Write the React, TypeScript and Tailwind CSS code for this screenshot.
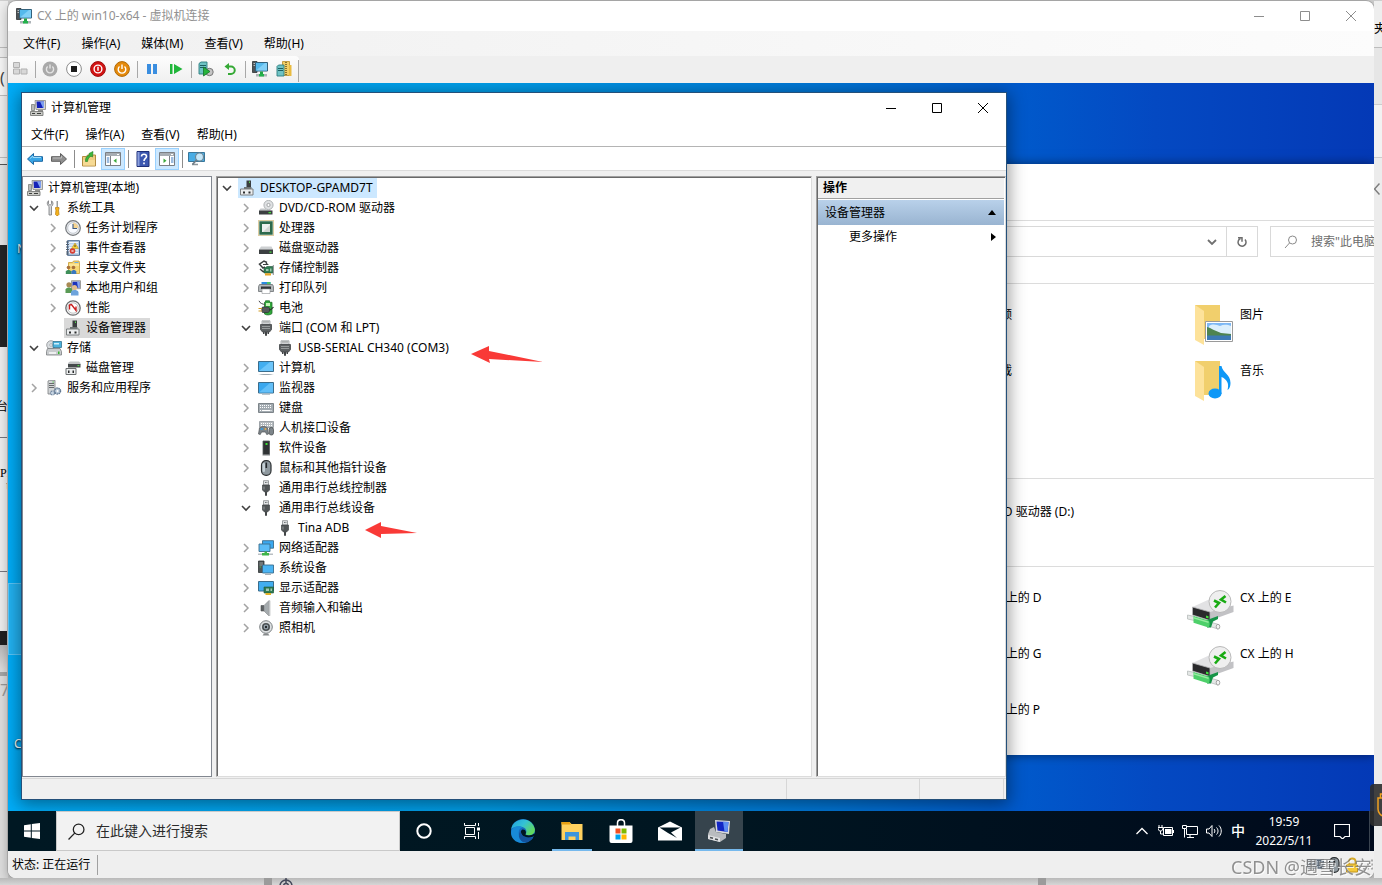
import React from 'react';

type TreeItem = {
  label: string;
  icon: string;
  depth: number;
  state?: 'open' | 'closed' | 'leaf' | 'root';
  selected?: boolean;
  arrow?: 'long' | 'short';
};

const indents = ['pl-0', 'pl-[19px]', 'pl-[38px]'];

const consoleTree: TreeItem[] = [
  { label: '计算机管理(本地)', icon: 'pc', depth: 0, state: 'root' },
  { label: '系统工具', icon: 'tools', depth: 0, state: 'open' },
  { label: '任务计划程序', icon: 'clock', depth: 1, state: 'closed' },
  { label: '事件查看器', icon: 'event', depth: 1, state: 'closed' },
  { label: '共享文件夹', icon: 'share', depth: 1, state: 'closed' },
  { label: '本地用户和组', icon: 'users', depth: 1, state: 'closed' },
  { label: '性能', icon: 'perf', depth: 1, state: 'closed' },
  { label: '设备管理器', icon: 'device', depth: 1, state: 'leaf', selected: true },
  { label: '存储', icon: 'storage', depth: 0, state: 'open' },
  { label: '磁盘管理', icon: 'disk', depth: 1, state: 'leaf' },
  { label: '服务和应用程序', icon: 'services', depth: 0, state: 'closed' },
];

const deviceTree: TreeItem[] = [
  { label: 'DESKTOP-GPAMD7T', icon: 'device', depth: 0, state: 'open', selected: true },
  { label: 'DVD/CD-ROM 驱动器', icon: 'dvd', depth: 1, state: 'closed' },
  { label: '处理器', icon: 'cpu', depth: 1, state: 'closed' },
  { label: '磁盘驱动器', icon: 'hdd', depth: 1, state: 'closed' },
  { label: '存储控制器', icon: 'controller', depth: 1, state: 'closed' },
  { label: '打印队列', icon: 'printer', depth: 1, state: 'closed' },
  { label: '电池', icon: 'battery', depth: 1, state: 'closed' },
  { label: '端口 (COM 和 LPT)', icon: 'port', depth: 1, state: 'open' },
  { label: 'USB-SERIAL CH340 (COM3)', icon: 'port', depth: 2, state: 'leaf', arrow: 'long' },
  { label: '计算机', icon: 'computer', depth: 1, state: 'closed' },
  { label: '监视器', icon: 'monitor', depth: 1, state: 'closed' },
  { label: '键盘', icon: 'keyboard', depth: 1, state: 'closed' },
  { label: '人机接口设备', icon: 'hid', depth: 1, state: 'closed' },
  { label: '软件设备', icon: 'software', depth: 1, state: 'closed' },
  { label: '鼠标和其他指针设备', icon: 'mouse', depth: 1, state: 'closed' },
  { label: '通用串行总线控制器', icon: 'usb', depth: 1, state: 'closed' },
  { label: '通用串行总线设备', icon: 'usb', depth: 1, state: 'open' },
  { label: 'Tina ADB', icon: 'usb', depth: 2, state: 'leaf', arrow: 'short' },
  { label: '网络适配器', icon: 'network', depth: 1, state: 'closed' },
  { label: '系统设备', icon: 'system', depth: 1, state: 'closed' },
  { label: '显示适配器', icon: 'display', depth: 1, state: 'closed' },
  { label: '音频输入和输出', icon: 'audio', depth: 1, state: 'closed' },
  { label: '照相机', icon: 'camera', depth: 1, state: 'closed' },
];

const glyphs: Record<string, React.ReactNode> = {
  pc: (
    <>
      <path d="M5 0.500h10.500v9H6z" fill="#d8d8d4" stroke="#8a8a88" strokeWidth="0.8" />
      <path d="M6.500 1.500h7.500v6.500H7z" fill="#1522b8" />
      <path d="M10 1.500h4v6.500h-1z" fill="#7ea0f0" />
      <path d="M8 10h5v1.500H8z" fill="#8d8d8a" />
      <path d="M1.500 4.500h3v6h-3z" fill="#b8bab8" stroke="#707270" strokeWidth="0.7" />
      <path d="M0.500 11.500h12.500v4H0.500z" fill="#c9cac6" stroke="#6d6f6d" strokeWidth="0.8" />
      <path d="M2 13.500h3M7 13.500h4" stroke="#3c3e3c" strokeWidth="1.200" />
    </>
  ),
  tools: (
    <>
      <path d="M2.500 0.800v3l1.500 1.500 1.500-1.500v-3c2 1.200 2 4.200 0 5.700V15H3V6.500C0.800 5 0.800 2 2.500 0.800z" fill="#d5d7d9" stroke="#77797b" strokeWidth="0.8" />
      <path d="M10.500 1h1.500v6h-1.500z" fill="#9a9c9e" />
      <path d="M9.500 7.500h3.500v1.500l-0.500 1 0.500 4.500-1 1h-1.500l-1-1 0.500-4.500-0.500-1z" fill="#f5b31d" stroke="#b87a08" strokeWidth="0.7" />
    </>
  ),
  clock: (
    <>
      <circle cx="8" cy="8" r="7.300" fill="#e8eaed" stroke="#74787c" strokeWidth="1.200" />
      <circle cx="8" cy="8" r="5.300" fill="#f9fbff" stroke="#aab0b8" strokeWidth="0.6" />
      <path d="M8 2.700a5.300 5.300 0 0 1 5.300 5.300H8z" fill="#f5d491" />
      <path d="M8 4v4.500h4" fill="none" stroke="#3c5980" strokeWidth="1.100" />
    </>
  ),
  event: (
    <>
      <path d="M2.500 0.700h12v14.600h-12z" fill="#b9d0ea" stroke="#4a688e" strokeWidth="1" />
      <path d="M4 2.500h9M4 5h9M4 7.500h9M4 10h9M4 12.500h9" stroke="#fff" strokeWidth="0.8" />
      <path d="M1 2h3M1 4.500h3M1 7h3M1 9.500h3M1 12h3M1 14h3" stroke="#55606d" strokeWidth="1" />
      <path d="M10 3l3.500 5.500h-7z" fill="#f8cf32" stroke="#b78a10" strokeWidth="0.5" />
      <path d="M10 4.800v2.200" stroke="#222" strokeWidth="0.8" />
      <circle cx="7.500" cy="11" r="2.800" fill="#d63c31" />
      <path d="M6.500 10l2 2m0-2l-2 2" stroke="#fff" strokeWidth="0.7" />
    </>
  ),
  share: (
    <>
      <path d="M3.500 2.500h4l1-1.500h5.500l0.500 1.500v11h-11z" fill="#f7d774" stroke="#c79c34" strokeWidth="0.8" />
      <path d="M9.500 2h4v1h-4z" fill="#6fb1e8" />
      <path d="M4 4.500h10v1H4z" fill="#fdf0b9" />
      <circle cx="3.500" cy="7.500" r="1.800" fill="#a9713a" />
      <path d="M0.800 14v-2.500c1-2 4.400-2 5.400 0V14z" fill="#3f8f5a" />
      <circle cx="8.500" cy="7.500" r="1.800" fill="#a9713a" />
      <path d="M6.300 14v-2.500c1-2 4-2 5 0V14z" fill="#3a78c0" />
    </>
  ),
  users: (
    <>
      <path d="M6.500 0.700h9v8h-9z" fill="#d8d8d4" stroke="#8a8a88" strokeWidth="0.8" />
      <path d="M7.500 1.700h7v6h-7z" fill="#1c32bc" />
      <path d="M12 1.700h2.500v6h-1.500z" fill="#86a8f4" />
      <circle cx="4" cy="4.800" r="2.600" fill="#a98a54" />
      <path d="M0.500 13V9.500c1.500-2.600 5.500-2.600 7 0V13z" fill="#5a9a55" />
      <circle cx="9.500" cy="7.500" r="2.600" fill="#e3bd8d" />
      <path d="M6 15.500V12c1.500-2.600 6-2.600 7.500 0v3.500z" fill="#6ea4dc" />
    </>
  ),
  perf: (
    <>
      <circle cx="8" cy="8" r="7.200" fill="#f4f4f4" stroke="#6c6e70" strokeWidth="1.300" />
      <circle cx="8" cy="8" r="5.200" fill="#fff" stroke="#b5b7b9" strokeWidth="0.8" />
      <path d="M4.500 9.500V5l2-0.500 4.500 6V6.500" fill="none" stroke="#c91d1d" strokeWidth="1.400" />
    </>
  ),
  device: (
    <>
      <path d="M7.500 0.500h4.500v6.500H7.500z" fill="#3b3f40" />
      <path d="M10 1.500h1v1.500h-1z" fill="#55d84e" />
      <path d="M5 7h7.500v2H5z" fill="#6f7475" />
      <path d="M1.500 9h12.500v6H1.500z" fill="#eceeef" stroke="#7b7f80" strokeWidth="1" />
      <path d="M4 11.500h2v2H4zM9.500 11.500h2v2h-2z" fill="#2b2d2e" />
    </>
  ),
  storage: (
    <>
      <circle cx="5" cy="5" r="4.300" fill="#d9dde0" stroke="#8d9194" strokeWidth="0.8" />
      <circle cx="5" cy="5" r="1.300" fill="#fff" stroke="#8d9194" strokeWidth="0.6" />
      <path d="M7 1.500h8.500v6H7z" fill="#4bb2dc" stroke="#34748f" strokeWidth="0.8" />
      <path d="M8 3h5v1.500H8z" fill="#cdeefa" />
      <path d="M1.500 8.500h12.500l1.500 3v3.500H0.500v-3.500z" fill="#c9ccce" stroke="#7b7f82" strokeWidth="0.8" />
      <path d="M3 12h7v2H3z" fill="#eff0f1" />
      <path d="M12 11.500h1.500v2.500H12z" fill="#35b52e" />
    </>
  ),
  disk: (
    <>
      <path d="M3 3l2-1.500h9l1.500 1.500v2H3z" fill="#c2c5c6" />
      <path d="M3 4h12.500v3.500H3z" fill="#45494b" />
      <path d="M12.500 5h1.800v1.200h-1.800z" fill="#4dd746" />
      <path d="M1 8.500h10v6H1z" fill="#eceeef" stroke="#6b6f70" strokeWidth="1" />
      <path d="M3 10.500h1.500v2.500H3zM7.500 10.500H9v2.500H7.500z" fill="#2b2d2e" />
    </>
  ),
  services: (
    <>
      <path d="M2 1l1.500-0.700h5.500V14H2z" fill="#d2d5d7" stroke="#7b7f82" strokeWidth="0.8" />
      <path d="M3 3.500h5M3 5.500h5M3 7.500h5" stroke="#5a5e60" strokeWidth="0.9" />
      <path d="M6.500 1.500h1.300v1H6.500z" fill="#3fbd38" />
      <circle cx="11.500" cy="11" r="3" fill="#b9c9da" stroke="#5f7690" strokeWidth="1.500" strokeDasharray="1.400 0.7" />
      <circle cx="11.500" cy="11" r="1" fill="#fff" />
      <circle cx="6.500" cy="13" r="2" fill="#c8d6e4" stroke="#6f86a0" strokeWidth="1.200" strokeDasharray="1.100 0.6" />
    </>
  ),
  dvd: (
    <>
      <circle cx="10.500" cy="5" r="4.600" fill="#dfe1e3" stroke="#a0a4a6" strokeWidth="0.8" />
      <circle cx="10.500" cy="5" r="1.600" fill="#fff" stroke="#909496" strokeWidth="0.8" />
      <path d="M2.500 8.500h5l2 1.500h3l2 0.500H1z" fill="#c5c8ca" />
      <path d="M1 10.500h13.500v4H1z" fill="#3b3f41" />
      <path d="M10.500 12h2.500v1.200h-2.500z" fill="#48dc40" />
    </>
  ),
  cpu: (
    <>
      <path d="M0.500 0.500h15v15h-15z" fill="none" stroke="#bb9a44" strokeWidth="1" strokeDasharray="1 1" />
      <path d="M1.300 1.300h13.400v13.400H1.300z" fill="#2d6a4c" />
      <path d="M4 4h8v8H4z" fill="#eef0ef" />
      <path d="M5 12L12 5v7z" fill="#d2d6d3" />
    </>
  ),
  hdd: (
    <>
      <path d="M3 6.500h10.500L15 9.500H1z" fill="#cdd0d2" />
      <path d="M1 9.500h14v4.500H1z" fill="#3b3f41" />
      <path d="M11.500 11.500h2v1.200h-2z" fill="#48dc40" />
    </>
  ),
  controller: (
    <>
      <path d="M9 2.500L6 1 1.500 4.200 5 8l2-1" fill="none" stroke="#3c3f40" strokeWidth="1.500" />
      <path d="M5 4.500h4.500l-1.500-1.500" fill="none" stroke="#3c3f40" strokeWidth="1.200" />
      <path d="M2 9l3 2.500 2 0.500" fill="none" stroke="#3c3f40" strokeWidth="1.400" />
      <path d="M6 8.500l3-2h6v6.500H6z" fill="#2f7d53" stroke="#1f5437" strokeWidth="0.6" />
      <path d="M8 9h2.500v2H8zM12 8.500h1.500v3H12z" fill="#9cc5ae" />
      <path d="M7 13.200h6v2.300H7z" fill="#e4a527" />
      <path d="M15.300 5v10" stroke="#8a8e90" strokeWidth="1" />
    </>
  ),
  printer: (
    <>
      <path d="M3.500 2h9v3h-9z" fill="#2c8be0" />
      <path d="M9 2h3.500v3H9z" fill="#45c06a" />
      <path d="M1.500 4.500h13l1 2v5h-15v-5z" fill="#b4b8ba" stroke="#6d7173" strokeWidth="0.8" />
      <path d="M3 6.500h10v2.500H3z" fill="#33373a" />
      <path d="M4 9h8v4.500H4z" fill="#fff" stroke="#8d9193" strokeWidth="0.6" />
    </>
  ),
  battery: (
    <>
      <path d="M7.500 0.800h4v1.500h2.500v11.200c-1.500 1.500-5 2-7.500 0.500V2.300h1z" fill="#2fa83a" stroke="#22702a" strokeWidth="0.8" />
      <path d="M8 3h4v3H8z" fill="#c6f5b8" />
      <path d="M1 0.800c1 3 4 3 6 4" fill="none" stroke="#4a4d4f" strokeWidth="1" />
      <path d="M4.500 7h5c3 0 3 5.500 0 5.500h-5c-1-1-1-4.500 0-5.500z" fill="#54585a" stroke="#2d3031" strokeWidth="0.7" />
      <path d="M0.500 8.500h3.500M0.500 11h3.500" stroke="#d09a22" strokeWidth="1.200" />
      <path d="M11 10c2 0 3-1 4.500-3" fill="none" stroke="#2d3031" strokeWidth="1.200" />
    </>
  ),
  port: (
    <>
      <path d="M4 0.800h8v3.500H4z" fill="#dcdedf" stroke="#9b9fa1" strokeWidth="0.8" />
      <path d="M5.500 2h1M7.500 2h1M9.500 2h1" stroke="#54585a" strokeWidth="1" />
      <path d="M2.500 4.500h11v5l-2 2.500h-7l-2-2.500z" fill="#5d6163" stroke="#414446" strokeWidth="0.8" />
      <path d="M4 6.500h8M4 8.500h8" stroke="#a4a8aa" strokeWidth="0.8" />
      <path d="M5 12h1.500v2H5zM9.500 12H11v2H9.500zM7 12h2v3.700H7z" fill="#414446" />
    </>
  ),
  computer: (
    <>
      <path d="M0.500 1.500h15v10h-15z" fill="#42aef0" stroke="#3b6d8c" strokeWidth="1" />
      <path d="M1 11L12 2h3v9z" fill="#6cc5fa" />
      <path d="M0 15c3-1.500 13-1.500 16 0z" fill="#9ba7b0" />
    </>
  ),
  monitor: (
    <>
      <path d="M0.500 2.500h15v10.500h-15z" fill="#3aa8ef" stroke="#3b6d8c" strokeWidth="1" />
      <path d="M1 12.500L12 3h3v9.500z" fill="#62bff8" />
      <path d="M4 14.500h8" stroke="#bcc6cc" strokeWidth="1" />
    </>
  ),
  keyboard: (
    <>
      <path d="M0.500 3.500h15v9h-15z" fill="#a3abb1" stroke="#7d8489" strokeWidth="1" />
      <path d="M2 5.500h12M2 7.500h12M2 10.500h1.500M12.500 10.500H14" stroke="#fff" strokeWidth="1" strokeDasharray="1 1" />
      <path d="M4 10.500h8" stroke="#fff" strokeWidth="1" />
    </>
  ),
  hid: (
    <>
      <path d="M1.500 1.500h14v6h-14z" fill="#b4babe" stroke="#8d9499" strokeWidth="0.8" />
      <path d="M3 3.500h11M3 5.500h11" stroke="#fff" strokeWidth="1" strokeDasharray="1 1" />
      <path d="M1.500 8c2-2 6-2 8 0l1 6-1.800 0.500L7.500 12h-4l-1.200 2.500L0.500 14z" fill="#7d858a" stroke="#4d5255" strokeWidth="0.7" />
      <circle cx="3.800" cy="9" r="1.100" fill="#2d9fe8" />
      <circle cx="7.500" cy="9" r="0.900" fill="#e8b04a" />
      <rect x="11.200" y="7.500" width="4.300" height="7.500" rx="2" fill="#7d858a" stroke="#3f4345" strokeWidth="0.7" />
    </>
  ),
  software: (
    <>
      <path d="M5 1h6.500v13.500H5z" fill="#2f3234" stroke="#545859" strokeWidth="0.8" />
      <path d="M7.500 3h2v2h-2z" fill="#3de035" />
      <path d="M4.500 14.500H12v1H4.500z" fill="#7d8183" />
    </>
  ),
  mouse: (
    <>
      <rect x="3.500" y="0.700" width="9.500" height="14.600" rx="4.500" fill="#8f999f" stroke="#2c3032" strokeWidth="1.200" />
      <rect x="4.500" y="3" width="2.500" height="9" rx="1.200" fill="#c5d0d6" />
      <path d="M8.300 2.500v5.500" stroke="#23272a" strokeWidth="1.600" />
    </>
  ),
  usb: (
    <>
      <path d="M5.500 0.700h5v4.500h-5z" fill="#e2e4e5" stroke="#85898b" strokeWidth="0.8" />
      <path d="M7 2.500h0.800M8.500 2.500h0.800" stroke="#54585a" strokeWidth="1" />
      <path d="M4.500 5h7v5l-2 2h-3l-2-2z" fill="#515557" stroke="#434648" strokeWidth="0.7" />
      <path d="M7 12h2v3.700H7z" fill="#434648" />
      <path d="M6 6.500v3" stroke="#9a9ea0" strokeWidth="0.9" />
    </>
  ),
  network: (
    <>
      <path d="M4.500 0.700h11v7.500h-11z" fill="#3aa8ef" stroke="#3b6d8c" strokeWidth="0.9" />
      <path d="M1 4h11v7.500H1z" fill="#5bbcf6" stroke="#3b6d8c" strokeWidth="0.9" />
      <path d="M6.500 11.500h2.500v1.500h2v2.500H4v-2.500h2.500z" fill="#3fb54a" />
      <path d="M0 14.200h4M11 14.200h4" stroke="#b9bfc3" strokeWidth="1.600" />
    </>
  ),
  system: (
    <>
      <path d="M0.500 1h5.500v11.500H0.500z" fill="#4f5557" stroke="#2f3335" strokeWidth="0.8" />
      <path d="M1.500 3h3.500M1.500 5h3.500" stroke="#a9adaf" strokeWidth="0.8" />
      <path d="M1.800 6.500h1v1h-1z" fill="#47dc40" />
      <path d="M4.500 5h11v8h-11z" fill="#4bb4f3" stroke="#3b6d8c" strokeWidth="0.9" />
      <path d="M7 14.500h6" stroke="#a9b2b8" strokeWidth="1" />
    </>
  ),
  display: (
    <>
      <path d="M0.500 1.500h15v9.500h-15z" fill="#42aef0" stroke="#3b6d8c" strokeWidth="1" />
      <path d="M6 7h9.500v6H6z" fill="#2f7d53" stroke="#1f5437" strokeWidth="0.6" />
      <path d="M8 8.500h3v2.500H8zM12.500 8.500h1.500v2.500h-1.500z" fill="#a3c8b3" />
      <path d="M7.500 13h5.500v2H7.500z" fill="#e4b227" />
    </>
  ),
  audio: (
    <>
      <path d="M3 5.500h3v5.500H3z" fill="#5d6264" stroke="#4d5153" strokeWidth="0.6" />
      <path d="M6 5.500L10.500 1v14.500L6 11z" fill="#a5abae" stroke="#7d8284" strokeWidth="0.6" />
      <path d="M10.500 0.700h1.500v15h-1.500z" fill="#cfd3d5" stroke="#85898b" strokeWidth="0.4" />
    </>
  ),
  camera: (
    <>
      <circle cx="8" cy="7" r="6.300" fill="#dde0e2" stroke="#7c8183" strokeWidth="1" />
      <circle cx="8" cy="7" r="4" fill="#4b5053" />
      <circle cx="8" cy="7" r="2.400" fill="#9aa7b1" />
      <circle cx="8" cy="7" r="1.200" fill="#23282b" />
      <path d="M6 13.500h4l1.500 2h-7z" fill="#85898b" />
    </>
  ),
  vm: (
    <>
      <path d="M0.500 0.500h4.500v11H0.500z" fill="#4d5356" stroke="#2f3335" strokeWidth="0.8" />
      <path d="M1.500 2.500h2.500M1.500 4.500h2.500" stroke="#d3d6d8" strokeWidth="0.8" />
      <path d="M3.500 1.500h12v8.500h-12z" fill="#55b9ec" stroke="#33617b" strokeWidth="1" />
      <path d="M4 9.500L13 2h2v7.500z" fill="#82d0f7" />
      <path d="M8 10.500h3v2.500H8z" fill="#23a546" />
      <path d="M4 13h11v2.500H4z" fill="#aeb4b8" />
      <path d="M7 13h5v2.500H7z" fill="#23b34c" />
    </>
  ),
};

function Glyph({ name, className = 'size-4' }: { name: string; className?: string }) {
  return (
    <svg viewBox="0 0 16 16" className={`${className} shrink-0`} aria-hidden="true">
      {glyphs[name]}
    </svg>
  );
}

function Chevron({ open }: { open: boolean }) {
  return (
    <svg viewBox="0 0 10 10" className="size-[10px]" fill="none" aria-hidden="true">
      {open ? (
        <path d="M1 3l4 4 4-4" stroke="#404040" strokeWidth="1.600" />
      ) : (
        <path d="M3 1l4 4-4 4" stroke="#a3a3a3" strokeWidth="1.500" />
      )}
    </svg>
  );
}

function RedArrow({ kind }: { kind: 'long' | 'short' }) {
  return kind === 'long' ? (
    <svg viewBox="0 0 72 18" className="absolute left-full top-0 ml-[18px] mt-2 h-[18px] w-[72px]" aria-hidden="true">
      <path d="M0 8L18 0v5l54 11-54-3 1 4z" fill="#f93a37" />
    </svg>
  ) : (
    <svg viewBox="0 0 52 16" className="absolute left-full top-0 ml-3 mt-1 h-4 w-[52px]" aria-hidden="true">
      <path d="M0 8L16 0v4l36 7-36 1v4z" fill="#f93a37" />
    </svg>
  );
}

function Tree({ items, tone }: { items: TreeItem[]; tone: string }) {
  return (
    <ul>
      {items.map((item) => (
        <li key={item.label} className={`flex h-5 items-center ${indents[item.depth]}`}>
          {item.state !== 'root' && (
            <span className="mr-[3px] flex w-4 shrink-0 justify-center">
              {item.state === 'open' && <Chevron open />}
              {item.state === 'closed' && <Chevron open={false} />}
            </span>
          )}
          <span
            className={`relative flex h-5 items-center gap-[5px] whitespace-nowrap pl-px pr-1 ${item.selected ? tone : ''}`}
          >
            <Glyph name={item.icon} />
            {item.label}
            {item.arrow && <RedArrow kind={item.arrow} />}
          </span>
        </li>
      ))}
    </ul>
  );
}

function WindowControls({ className }: { className: string }) {
  const shapes = [
    { label: '最小化', d: 'M0 5.500h10' },
    { label: '最大化', d: 'M0.500 0.500h9v9h-9z' },
    { label: '关闭', d: 'M0 0l10 10M10 0L0 10' },
  ];
  return (
    <div className={`ml-auto flex self-stretch ${className}`}>
      {shapes.map((s) => (
        <button key={s.label} type="button" aria-label={s.label} className="flex w-[46px] items-center justify-center">
          <svg viewBox="0 0 10 10" className="size-[10px] overflow-visible" fill="none" stroke="currentColor">
            <path d={s.d} />
          </svg>
        </button>
      ))}
    </div>
  );
}

function ToolButton({ label, className, children }: { label: string; className: string; children: React.ReactNode }) {
  return (
    <button type="button" aria-label={label} className={`flex shrink-0 items-center justify-center ${className}`}>
      {children}
    </button>
  );
}

function Svg({ box = '0 0 16 16', className = 'size-4', children }: { box?: string; className?: string; children: React.ReactNode }) {
  return (
    <svg viewBox={box} className={className} fill="none" aria-hidden="true">
      {children}
    </svg>
  );
}

function VmSeparator() {
  return (
    <span className="flex w-[6px] shrink-0 justify-center">
      <span className="h-[17px] w-px bg-[#a8a8a8]" />
    </span>
  );
}

function VmToolbar() {
  const btn = 'h-6 w-6';
  return (
    <div className="flex h-[27px] shrink-0 bg-[#efefef]">
      <div className="flex items-center rounded-tr-sm bg-linear-to-b from-[#fdfdfd] to-[#efefef] pb-px">
        <ToolButton label="Ctrl+Alt+Del" className={btn}>
          <Svg>
            <path d="M1.500 1.500h6v5h-6zM1.500 8h6v5h-6zM9 8h6v5H9z" fill="#d8d8d8" stroke="#b0b0b0" />
          </Svg>
        </ToolButton>
        <VmSeparator />
        <ToolButton label="启动" className={btn}>
          <Svg>
            <circle cx="8" cy="8" r="7.500" fill="#a9a9a9" />
            <path d="M5.700 5.500a3.600 3.600 0 1 0 4.600 0M8 3.500v4" stroke="#e4e4e4" strokeWidth="1.400" />
          </Svg>
        </ToolButton>
        <ToolButton label="强行关闭" className={btn}>
          <Svg>
            <circle cx="8" cy="8" r="7.400" fill="#fff" stroke="#8c8c8c" />
            <path d="M5 5h6v6H5z" fill="#1d1d1d" />
          </Svg>
        </ToolButton>
        <ToolButton label="关闭" className={btn}>
          <Svg>
            <circle cx="8" cy="8" r="7.400" fill="#d31313" stroke="#9c1010" />
            <circle cx="8" cy="8" r="3.900" stroke="#fff" strokeWidth="1.400" />
            <path d="M8 5.700v4" stroke="#fff" strokeWidth="1.500" />
          </Svg>
        </ToolButton>
        <ToolButton label="保存" className={btn}>
          <Svg>
            <circle cx="8" cy="8" r="7.400" fill="#e58a0c" stroke="#b06a08" />
            <path d="M5.500 5.500a3.800 3.800 0 1 0 5 0M8 3.500v4.500" stroke="#fff" strokeWidth="1.400" />
          </Svg>
        </ToolButton>
        <VmSeparator />
        <ToolButton label="暂停" className={btn}>
          <Svg>
            <path d="M3 3h4v10H3zM9 3h4v10H9z" fill="#3a8ee0" />
          </Svg>
        </ToolButton>
        <ToolButton label="重置" className={btn}>
          <Svg>
            <path d="M2 3h2.500v10H2zM6 3l8.500 5L6 13z" fill="#20b63a" />
          </Svg>
        </ToolButton>
        <VmSeparator />
        <ToolButton label="检查点" className={btn}>
          <Svg>
            <path d="M1 2.500L3 1h6v12H1z" fill="#6fc3c5" stroke="#2d7d80" strokeWidth="0.9" />
            <path d="M2 4.500h6M2 6.500h6" stroke="#1d5f62" />
            <circle cx="11.500" cy="11" r="3.700" fill="#c5c5c5" stroke="#777" />
            <path d="M5.500 6l6.500 4.500-6.500 4.500z" fill="#26b43c" stroke="#16732a" strokeWidth="0.8" />
          </Svg>
        </ToolButton>
        <ToolButton label="还原" className={btn}>
          <Svg>
            <path d="M5 5.500h4a3.600 3.600 0 0 1 0 7.500H6" stroke="#35a935" strokeWidth="2" />
            <path d="M7 2v7L2.500 5.500z" fill="#35a935" />
          </Svg>
        </ToolButton>
        <VmSeparator />
        <ToolButton label="增强会话" className={btn}>
          <Glyph name="vm" />
        </ToolButton>
        <ToolButton label="共享" className={btn}>
          <Svg>
            <path d="M6.500 0.500h7v14h-7z" fill="#f2cf66" stroke="#b78d2c" strokeWidth="0.8" />
            <path d="M10 1v13" stroke="#6d5a22" strokeWidth="1.600" strokeDasharray="1 1" />
            <path d="M13 4h2.500v11H13z" fill="#e9bb40" />
            <path d="M1 5.500L2.500 4H8v11H1z" fill="#6fc3c5" stroke="#2d7d80" strokeWidth="0.9" />
            <path d="M2 7.500h5M2 9.500h5" stroke="#1d5f62" />
          </Svg>
        </ToolButton>
        <span className="ml-0.5 h-[22px] w-px self-end bg-[#a8a8a8]" />
      </div>
    </div>
  );
}

function ConsoleToolbar() {
  const btn = 'h-[22px] w-6';
  const active = 'h-[22px] w-6 border border-[#99d1ff] bg-[#cce8ff]';
  const sep = (
    <span className="flex w-[6px] shrink-0 justify-center">
      <span className="h-[18px] w-px bg-[#8c8c8c]" />
    </span>
  );
  const pane = (flip: boolean) => (
    <Svg>
      <path d="M0.500 1.500h15v13h-15z" fill="#fff" stroke="#7b7f84" />
      <path d="M1 2h14v3H1z" fill="#a7adb3" />
      <path d="M12 3.500h2" stroke="#fff" />
      {flip ? (
        <>
          <path d="M10.500 5v9" stroke="#7b7f84" />
          <path d="M12 7h2.500M12 9h2.500M12 11h2.500" stroke="#3a78c0" />
          <path d="M4.500 7.500l3 2.200-3 2.300z" fill="#3aa83a" />
        </>
      ) : (
        <>
          <path d="M5.500 5v9" stroke="#7b7f84" />
          <path d="M1.800 7h2.500M1.800 9h2.500M1.800 11h2.500" stroke="#3a78c0" />
          <path d="M11.500 7.500l-3 2.200 3 2.300z" fill="#3aa83a" />
        </>
      )}
    </Svg>
  );
  return (
    <div className="flex h-6 shrink-0 items-center border-b border-[#dcdcdc] bg-white pl-px">
      <ToolButton label="后退" className={btn}>
        <Svg>
          <path d="M0.500 8l6-5.500v3.200h9v4.600h-9v3.200z" fill="#38a5e6" stroke="#1b67a3" />
          <path d="M3 7.500l3-2.500v1.500h8" stroke="#9bdcfb" />
        </Svg>
      </ToolButton>
      <ToolButton label="前进" className={btn}>
        <Svg>
          <path d="M15.500 8l-6-5.500v3.200h-9v4.600h9v3.200z" fill="#8f8f8f" stroke="#5f5f5f" />
          <path d="M2 7h8.500V5" stroke="#bdbdbd" />
        </Svg>
      </ToolButton>
      {sep}
      <ToolButton label="向上一级" className={btn}>
        <Svg>
          <path d="M1.500 5.500h4l1-1.500h8v11h-13z" fill="#eecb80" stroke="#b28b40" />
          <path d="M2 9h12v5.500H2z" fill="#f6da94" />
          <path d="M4.500 10.500c0-4 1-5.500 3.500-6V2.500l4-2-0.500 5.500-1.500-0.800C8 6 7 7.500 6.500 10.500z" fill="#3cb83a" stroke="#207a22" strokeWidth="0.6" />
        </Svg>
      </ToolButton>
      <ToolButton label="显示/隐藏控制台树" className={active}>{pane(false)}</ToolButton>
      {sep}
      <ToolButton label="帮助" className={btn}>
        <Svg>
          <path d="M2 0.500h12v15H2z" fill="#3c57b0" stroke="#1f2f77" />
          <path d="M2.500 1h2v14h-2z" fill="#8ba0dc" />
          <path d="M6.500 5.500c0-3 5-3 5 0 0 2-2.500 2-2.500 4.500M9 11.500v1.800" stroke="#fff" strokeWidth="1.600" />
        </Svg>
      </ToolButton>
      <ToolButton label="显示/隐藏操作窗格" className={active}>{pane(true)}</ToolButton>
      {sep}
      <ToolButton label="扫描检测硬件改动" className={btn}>
        <Svg box="0 0 18 16" className="h-4 w-[18px]">
          <path d="M0.500 1.500h16v9h-16z" fill="#48ace4" stroke="#3a779a" />
          <path d="M4 13.500h6" stroke="#8f979c" strokeWidth="1.400" />
          <circle cx="11.500" cy="6" r="4" fill="#c4e6f8" stroke="#6d8796" strokeWidth="1.200" />
          <path d="M8.500 9L4.500 13.500" stroke="#6d7d88" strokeWidth="1.800" />
        </Svg>
      </ToolButton>
    </div>
  );
}

function ComputerManagement() {
  return (
    <section className="absolute bottom-[11px] left-[13px] right-[367px] top-[9px] flex flex-col border border-[#24507a] bg-[#f0f0f0] shadow-[0_3px_16px_2px_rgba(0,0,0,0.4)]">
      <header className="flex h-[29px] shrink-0 items-center bg-white pl-2">
        <Glyph name="pc" />
        <h1 className="ml-[5px]">计算机管理</h1>
        <WindowControls className="text-black" />
      </header>
      <nav className="flex h-[25px] shrink-0 items-center gap-px border-b border-[#b4b4b4] bg-white pl-px pt-0.5">
        {['文件(F)', '操作(A)', '查看(V)', '帮助(H)'].map((m) => (
          <button key={m} type="button" className="px-2">{m}</button>
        ))}
      </nav>
      <ConsoleToolbar />

      <div className="flex min-h-0 flex-1 gap-1 pt-[5px]">
        <div className="w-[190px] shrink-0 border border-[#828790] bg-white pl-[3px] pt-px">
          <Tree items={consoleTree} tone="bg-[#d9d9d9]" />
        </div>
        <div className="min-w-0 flex-1 border border-b-[#dcdcdc] border-l-[#a0a0a0] border-r-[#dcdcdc] border-t-[#a0a0a0] bg-white p-px pl-[2px] shadow-[inset_1px_1px_0_#696969]">
          <Tree items={deviceTree} tone="bg-[#cce8ff]" />
        </div>
        <div className="w-[190px] shrink-0 border border-b-[#dcdcdc] border-l-[#a0a0a0] border-r-[#dcdcdc] border-t-[#a0a0a0] bg-white p-px shadow-[inset_1px_1px_0_#696969]">
          <h2 className="flex h-[21px] items-center border-b border-[#a0a0a0] bg-[#f0f0f0] pl-[5px] font-bold">操作</h2>
          <button type="button" className="mt-px flex h-[25px] w-full items-center justify-between bg-linear-to-b from-[#b9d1ea] to-[#99b4d1] pl-[7px] pr-2">
            设备管理器
            <Svg box="0 0 8 5" className="h-[5px] w-2">
              <path d="M0 5l4-5 4 5z" fill="#000" />
            </Svg>
          </button>
          <button type="button" className="flex h-6 w-full items-center justify-between pl-[31px] pr-2">
            更多操作
            <Svg box="0 0 5 8" className="h-2 w-[5px]">
              <path d="M0 0l5 4-5 4z" fill="#000" />
            </Svg>
          </button>
        </div>
      </div>

      <footer className="mt-px flex h-[21px] shrink-0 justify-end border-t border-[#d7d7d7]">
        <span className="w-[133px] border-l border-[#d7d7d7]" />
        <span className="w-[85px] border-x border-[#d7d7d7]" />
        <span className="w-[2px]" />
      </footer>
    </section>
  );
}

function FolderIcon({ kind }: { kind: 'pictures' | 'music' }) {
  return (
    <Svg box="0 0 48 48" className="size-12">
      <path d="M9 5h25v34H15z" fill="#f4d273" />
      <path d="M9 5h25v34H18V11z" fill="#f1cf6c" />
      <path d="M9 5l9 6v34l-9-5z" fill="#fde29a" />
      {kind === 'pictures' ? (
        <>
          <path d="M19.500 21.500h27v20h-27z" fill="#fff" stroke="#9a9a9a" />
          <path d="M21 23h24v17H21z" fill="#7db8f5" />
          <path d="M23 26c4-3 8-1 11 0 4-2 8-1 11 0v8H23z" fill="#dceffc" />
          <path d="M21 27c4 1 8 4 14 6l10 1v2H21z" fill="#4f8450" />
          <path d="M21 35.500h24v4.500H21z" fill="#3d7ab5" />
        </>
      ) : (
        <>
          <ellipse cx="29" cy="37.500" rx="6.500" ry="5" fill="#0e98f7" />
          <path d="M33 10h2.500c1 7 9 8 9 17 0 3-1 6-3 7 2-7-1-11-6-13v17H33z" fill="#0e98f7" />
        </>
      )}
    </Svg>
  );
}

function DriveIcon() {
  return (
    <Svg box="0 0 48 48" className="size-12">
      <path d="M6.500 24L24 16l23.500 7.500-23 6z" fill="#e2e2e4" />
      <path d="M24 29l23.500-6.500v6.500L24 37.500z" fill="#c2c2c5" />
      <path d="M6.500 24L24 29v8.500L6.500 32z" fill="#2a2a2c" stroke="#b5b5b7" strokeWidth="0.8" />
      <path d="M20 32.500l2.500 0.700v2.300L20 34.800z" fill="#3fe03a" />
      <path d="M1.500 32l7 1.500v4l-7-1.500z" fill="#e4e7e6" stroke="#b7bcbb" strokeWidth="0.8" />
      <path d="M24 39l8 2.300v4.700l-8-2.500z" fill="#e4e7e6" stroke="#b7bcbb" strokeWidth="0.8" />
      <path d="M21 37l11-4v3l-5 2.500-2 6h-4z" fill="#159447" />
      <path d="M7.500 33l15 4.500c1.500 1 1.500 5.500 0 7l-15-4.700z" fill="#4ed06a" />
      <path d="M7.500 34l15 4.500v1.500l-15-4.500z" fill="#97eba0" />
      <ellipse cx="32" cy="43.700" rx="1.800" ry="2.400" fill="#f4f4f4" stroke="#a5a5a5" />
      <circle cx="34" cy="18.500" r="11" fill="#efefef" stroke="#b9b9b9" />
      <path d="M28 17.500l5 2.500-4 4.500M39.500 13l-4.500 3.500 5 3" stroke="#18ab12" strokeWidth="2.600" />
    </Svg>
  );
}

function ExplorerItem({ label, icon }: { label: string; icon?: React.ReactNode }) {
  return (
    <li className="flex h-14 w-[252px] shrink-0 gap-[6px]">
      <span className="size-12 shrink-0">{icon}</span>
      <span className="whitespace-nowrap pt-[5px]">{label}</span>
    </li>
  );
}

function Explorer() {
  return (
    <section className="absolute bottom-14 right-0 top-[81px] flex w-[456px] flex-col overflow-hidden bg-white shadow-[0_0_10px_rgba(0,0,0,0.5)]">
      <div className="h-14 shrink-0" />
      <div className="flex h-16 shrink-0 gap-3 border-y border-[#dcdcdc] pt-[5px] text-[#6d6d6d]">
        <div className="flex h-[31px] w-[340px] shrink-0 items-stretch justify-end border border-[#d9d9d9]">
          <button type="button" aria-label="历史记录" className="flex w-7 items-center justify-center">
            <Svg box="0 0 10 10" className="size-[10px]">
              <path d="M1 3l4 4 4-4" stroke="#707070" strokeWidth="1.800" />
            </Svg>
          </button>
          <button type="button" aria-label="刷新" className="flex w-[31px] items-center justify-center border-l border-[#d9d9d9]">
            <Svg box="0 0 12 12" className="size-3">
              <path d="M9 3.500A4 4 0 1 1 4.500 2.500" stroke="#6d6d6d" strokeWidth="1.500" />
              <path d="M2 1.700h4v4" stroke="#6d6d6d" strokeWidth="1.500" />
            </Svg>
          </button>
        </div>
        <label className="flex h-[31px] w-[200px] shrink-0 items-center gap-[13px] border border-[#d9d9d9] pl-[13px]">
          <Svg box="0 0 14 14" className="size-[14px] shrink-0">
            <circle cx="8.500" cy="5" r="4" stroke="#8a8a8a" />
            <path d="M5.500 8L1 13" stroke="#8a8a8a" />
          </Svg>
          <input aria-label="搜索此电脑" placeholder={'搜索"此电脑"'} className="w-32 placeholder:text-[#6d6d6d]" />
        </label>
      </div>
      <ul className="flex min-h-[195px] w-[540px] shrink-0 flex-wrap content-start border-b border-[#dcdcdc] pl-4 pt-4">
        <ExplorerItem label="视频" />
        <ExplorerItem label="图片" icon={<FolderIcon kind="pictures" />} />
        <ExplorerItem label="下载" />
        <ExplorerItem label="音乐" icon={<FolderIcon kind="music" />} />
      </ul>
      <ul className="flex min-h-[88px] w-[540px] shrink-0 border-b border-[#dcdcdc] pl-4 pt-[18px]">
        <ExplorerItem label="DVD 驱动器 (D:)" />
      </ul>
      <ul className="flex w-[540px] shrink-0 flex-wrap content-start pl-4 pt-4">
        <ExplorerItem label="CX 上的 D" />
        <ExplorerItem label="CX 上的 E" icon={<DriveIcon />} />
        <ExplorerItem label="CX 上的 G" />
        <ExplorerItem label="CX 上的 H" icon={<DriveIcon />} />
        <ExplorerItem label="CX 上的 P" />
      </ul>
    </section>
  );
}

function Taskbar() {
  const app = 'h-10 w-12';
  return (
    <div className="flex h-10 shrink-0 bg-linear-to-r from-[#001823] via-[#001621] to-[#000a1c] text-white">
      <ToolButton label="开始" className={app}>
        <Svg>
          <path d="M0 2.300L6.800 1.300v6.200H0zM7.800 1.100L16 0v7.500H7.800zM0 8.500h6.800v6.200L0 13.700zM7.800 8.500H16V16l-8.200-1.100z" fill="#fff" />
        </Svg>
      </ToolButton>
      <label className="flex w-[344px] shrink-0 items-center gap-[11px] border border-[#c9c9c9] bg-[#f2f2f2] pl-[11px]">
        <Svg className="size-[17px]">
          <circle cx="10" cy="6" r="5" stroke="#222" strokeWidth="1.200" />
          <path d="M6.300 9.500L0.500 15.500" stroke="#222" strokeWidth="1.200" />
        </Svg>
        <input aria-label="搜索" placeholder="在此键入进行搜索" className="min-w-0 flex-1 text-sm placeholder:text-[#2b2b2b]" />
      </label>
      <ToolButton label="Cortana" className={app}>
        <Svg>
          <circle cx="8" cy="8" r="6.700" stroke="#fff" strokeWidth="2" />
        </Svg>
      </ToolButton>
      <ToolButton label="任务视图" className={app}>
        <Svg>
          <path d="M1.500 4.500h9v7h-9zM0.500 0v2.500h11V0M0.500 16v-2.500h11V16M14.500 0v3M14.500 9v7" stroke="#fff" />
          <path d="M13 4.500h3v3h-3z" fill="#fff" />
        </Svg>
      </ToolButton>
      <div className="ml-[3px] flex gap-px">
        <ToolButton label="Microsoft Edge" className={app}>
          <Svg box="0 0 24 24" className="size-6">
            <defs>
              <linearGradient id="edgeTop" x1="0" y1="0" x2="1" y2="0.6">
                <stop offset="0" stopColor="#1e9fe0" />
                <stop offset="0.5" stopColor="#34c1d6" />
                <stop offset="1" stopColor="#62d95c" />
              </linearGradient>
            </defs>
            <circle cx="12" cy="12" r="12" fill="#1769bd" />
            <path d="M0.300 10C2-1 20-4 23.800 10c0.800 6-6 7.500-9.500 5.500 2-2 1.500-6.500-3-7.500C7 7 2 8 0.300 10z" fill="url(#edgeTop)" />
            <path d="M0.100 13C0.500 7 9 6 11.500 8.500 8.500 9 7 12 8 16c1 4 4 6.500 7 7.500C5 25.500-0.500 19 0.100 13z" fill="#188ad8" />
            <path d="M9.800 12c-1 4 4.500 8 12.500 6.500-3 4.500-8 5.500-10.500 4.500C7 20 7 14 9.800 12z" fill="#13529c" />
            <path d="M10 12c-0.500 5 5 8 12.500 5.500 1-0.500 0.500 0.500 0 1L24 24l2-10-3.500 1c-3 2-6.500 1.500-8.200 0.500 1-1.300 0.800-3-0.300-4.500-2-1-3.500-0.500-4 1z" fill="#001621" />
          </Svg>
        </ToolButton>
        <ToolButton label="文件资源管理器" className="relative h-10 w-12">
          <Svg box="0 0 24 24" className="size-6">
            <path d="M1.500 3h8l2 2h11v16h-21z" fill="#ffd15f" />
            <path d="M1.500 3h8l1.500 2.500H1.500z" fill="#e69f13" />
            <path d="M5 21v-8h14v8h-3.500v-3.500h-7V21z" fill="#3c95dd" />
          </Svg>
          <span className="absolute inset-x-1 bottom-0 h-0.5 bg-[#76b9ed]" />
        </ToolButton>
        <ToolButton label="Microsoft Store" className={app}>
          <Svg box="0 0 24 24" className="size-6">
            <path d="M8.500 8V4c0-4.500 7-4.500 7 0v4" stroke="#fff" strokeWidth="1.500" />
            <path d="M0.500 6.500h23v15.500a2 2 0 0 1-2 2h-19a2 2 0 0 1-2-2z" fill="#fff" />
            <path d="M6.500 9.500h5v5h-5z" fill="#f25022" />
            <path d="M12.500 9.500h5v5h-5z" fill="#7fba00" />
            <path d="M6.500 15.500h5v5h-5z" fill="#00a4ef" />
            <path d="M12.500 15.500h5v5h-5z" fill="#ffb900" />
          </Svg>
        </ToolButton>
        <ToolButton label="邮件" className={app}>
          <Svg box="0 0 24 24" className="size-6">
            <path d="M0 8.500l12-6 12 6v13H0z" fill="#fff" />
            <path d="M1.500 8.500h21l-9.500 5 6 5.500-9-5z" fill="#001621" />
          </Svg>
        </ToolButton>
        <ToolButton label="计算机管理" className="relative h-10 w-12 bg-[#36444d]">
          <Svg box="0 0 24 24" className="size-6">
            <path d="M8 1l15 1-1 13-13-2z" fill="#d8dadd" />
            <path d="M9.500 2.500l12 0.500-1 10-10-1.500z" fill="#1226c4" />
            <path d="M16 2.800l5.500 0.200-1 10-3-0.500z" fill="#5d8cf2" />
            <path d="M3 10l4-2 2 5 10 2v4l-6 4-12-3v-5z" fill="#b9bcbf" />
            <path d="M1 16l12 3v4L1 20z" fill="#dfe1e3" />
            <path d="M3 18.500l3 0.800M8 20l3 0.700" stroke="#4c5054" strokeWidth="1.500" />
          </Svg>
          <span className="absolute inset-x-0 bottom-0 h-0.5 bg-[#76b9ed]" />
        </ToolButton>
      </div>

      <div className="ml-auto flex items-center">
        <ToolButton label="显示隐藏的图标" className="h-10 w-6">
          <Svg box="0 0 12 12" className="size-3">
            <path d="M0.500 9L6 3.500 11.500 9" stroke="#fff" strokeWidth="1.300" />
          </Svg>
        </ToolButton>
        <ToolButton label="电源" className="h-10 w-6">
          <Svg>
            <path d="M5.500 4.500h9v8h-9z" stroke="#fff" />
            <path d="M7 6h6.500v5H7zM15 7h1v3h-1z" fill="#fff" />
            <path d="M1 2v2.500M4 2v2.500M0 4.500h5v1.500l-1.500 2h-2L0 6zM2.500 8v3H5" stroke="#fff" />
          </Svg>
        </ToolButton>
        <ToolButton label="网络" className="h-10 w-6">
          <Svg>
            <path d="M5 3.500h10.500v8H4.500V6M8 12v2.500M5 14.500h7M0.500 2.500h4v3h-4zM2.500 6v8.500" stroke="#fff" />
          </Svg>
        </ToolButton>
        <ToolButton label="音量" className="h-10 w-6">
          <Svg>
            <path d="M0.500 6h2.500l3-3.500v11L3 10H0.500zM8 6c1.200 1 1.200 3 0 4M10.500 4.500c2 2 2 5 0 7M13 2.500c3 3 3 8 0 11" stroke="#fff" />
          </Svg>
        </ToolButton>
        <ToolButton label="输入法" className="h-10 w-6">
          <span className="text-sm font-medium">中</span>
        </ToolButton>
        <div className="w-[68px] text-center leading-[19px]">
          <div>19:59</div>
          <div>2022/5/11</div>
        </div>
        <ToolButton label="通知" className="h-10 w-12">
          <Svg>
            <path d="M0.500 1.500h15v12h-4.500l-2.500 2.500-2.500-2.500H0.500z" stroke="#fff" strokeWidth="1.200" />
          </Svg>
        </ToolButton>
        <span className="ml-[3px] h-full w-[5px] border-l border-[#3a4450]" />
      </div>
    </div>
  );
}

function VmStatus() {
  return (
    <footer className="relative flex h-[27px] shrink-0 items-center bg-[#efefef] pl-1">
      <span>状态: 正在运行</span>
      <span className="ml-[7px] h-5 w-px bg-[#a0a0a0]" />
      <div className="ml-auto flex items-center gap-[2px]">
        <Svg className="size-[17px]">
          <path d="M0 3h16v9H0z" fill="#5d6a78" />
          <path d="M1.500 5.500h13M1.500 7.500h13M3 10h10" stroke="#d4dbe2" strokeDasharray="1 1" />
        </Svg>
        <Glyph name="mouse" />
        <Svg>
          <path d="M5 7V4.500c0-4 6.500-4 6.500 0V7" stroke="#d6a927" strokeWidth="1.800" />
          <path d="M2.500 7h11v8h-11z" fill="#f5c93a" stroke="#c2951c" />
        </Svg>
        <Svg box="0 0 12 12" className="size-3">
          <path d="M9 1.500h2M5 5.500h2M9 5.500h2M1 9.500h2M5 9.500h2M9 9.500h2" stroke="#a9a9a9" strokeWidth="2" />
        </Svg>
      </div>
      <span className="absolute right-0.5 top-0 whitespace-nowrap text-lg leading-8 text-[#777777]/80 drop-shadow-[1px_1px_0_#ffffff]">
        CSDN @遇雪长安
      </span>
    </footer>
  );
}

// slivers of the page that sit behind the virtual machine window
function LeftEdge() {
  return (
    <div className="flex w-2 shrink-0 flex-col overflow-hidden whitespace-nowrap bg-[#eeeeee]">
      <div className="h-[47px] border-b border-[#bcbcbc]" />
      <div className="h-[10px] border-b border-[#bcbcbc]" />
      <div className="h-[38px] border-b border-[#bcbcbc] bg-[#f6f6f6] pt-2 text-base text-[#444444]">(</div>
      <div className="h-[62px] border-b border-[#bcbcbc]" />
      <div className="h-[7px] border-b border-[#555555]" />
      <div className="h-[80px] bg-[#e4e4e4]" />
      <div className="h-[102px] bg-[#242424]" />
      <div className="flex h-[91px] justify-end border-b border-[#77777f] pt-[50px]">
        <span>这台</span>
      </div>
      <div className="h-[134px] border-b border-[#77777f] pt-7 font-['Liberation_Serif'] leading-[14px]">
        <div>Pr</div>
        <div className="pl-1.5">U</div>
      </div>
      <div className="h-[59px]" />
      <div className="h-[14px] bg-[#202020]" />
      <div className="h-[31px] border-b-4 border-[#a6a6a6] bg-linear-to-b from-[#b9b9b9] to-[#e0e0e0]" />
      <div className="flex-1 bg-[#dedede] pt-0.5 text-base text-[#999999]">7</div>
    </div>
  );
}

function RightEdge() {
  return (
    <div className="flex w-2 shrink-0 flex-col overflow-hidden whitespace-nowrap bg-[#e6e6e6]">
      <div className="h-[47px] border-b border-[#bcbcbc] bg-[#eeeeee] pt-[18px]">夹</div>
      <div className="h-[57px] border-b border-[#cccccc]" />
      <div className="h-[53px] border-b border-[#cccccc] bg-[#f2f2f2]" />
      <div className="flex-1 bg-[#ececec] pt-[25px]">
        <Svg box="0 0 6 12" className="h-3 w-1.5">
          <path d="M5.500 0.500L0.500 6l5 5.500" stroke="#7d7d7d" strokeWidth="1.500" />
        </Svg>
      </div>
    </div>
  );
}

export default function App() {
  return (
    <div className="relative flex min-h-screen flex-col overflow-hidden bg-[#cfcfcf] pt-px font-['Noto_Sans','Noto_Sans_CJK_SC',sans-serif] text-xs leading-5 text-black">
      <div className="flex flex-1">
        <LeftEdge />
        <main className="flex min-w-0 flex-1 flex-col overflow-hidden rounded-lg bg-white shadow-[0_0_0_1px_#a5a5a5,0_4px_12px_rgba(0,0,0,0.3)]">
          <header className="flex h-[30px] shrink-0 items-center pl-2 text-[#919191]">
            <Glyph name="vm" />
            <span className="ml-[5px]">CX 上的 win10-x64 - 虚拟机连接</span>
            <WindowControls className="text-[#8d8d8d]" />
          </header>
          <nav className="flex h-[25px] shrink-0 items-center gap-px bg-linear-to-r from-[#f0f0f0] to-[#fcfcfc] pl-[5px]">
            {['文件(F)', '操作(A)', '媒体(M)', '查看(V)', '帮助(H)'].map((m) => (
              <button key={m} type="button" className="px-[10px]">{m}</button>
            ))}
          </nav>
          <VmToolbar />

          <div className="relative min-h-[640px] flex-1 overflow-hidden bg-[linear-gradient(90deg,#00adf8_0%,#009fea_35%,#0076d7_60%,#0059cb_74%,#0449c2_84%,#0439b6_100%)]">
            <span className="absolute left-[9px] top-[156px] text-white [text-shadow:0_1px_2px_#000]">N</span>
            <span className="absolute left-0 top-[500px] h-[72px] w-16 border border-[#5cc8fa] bg-[#22b4f4]" />
            <span className="absolute left-[6px] top-[651px] text-white [text-shadow:0_1px_2px_#000]">C</span>
            <Explorer />
            <ComputerManagement />
          </div>

          <Taskbar />
          <VmStatus />
        </main>
        <RightEdge />
      </div>

      <div className="flex h-[7px] shrink-0 justify-between overflow-hidden bg-linear-to-b from-[#b9b9b9] to-[#d6d6d6] pl-[264px] pr-[336px]">
        <div className="flex gap-1.5">
          <span className="w-2 bg-[#9b9b9b]" />
          <Svg className="size-4">
            <circle cx="8" cy="8" r="6" stroke="#44485a" strokeWidth="1.500" />
            <circle cx="8" cy="8" r="2.500" stroke="#44485a" strokeWidth="1.500" />
            <path d="M8 0v5M0 8h4M12 8h4" stroke="#44485a" strokeWidth="1.500" />
          </Svg>
        </div>
        <span className="w-2 bg-[#9b9b9b]" />
      </div>

      <button
        type="button"
        aria-label="USB 设备"
        className="absolute bottom-[59px] right-0 flex h-[42px] w-3 items-center overflow-hidden rounded-l bg-[#2e2e2e]/90 pl-[7px]"
      >
        <svg viewBox="0 0 14 24" className="h-6 w-[14px] shrink-0" fill="none" stroke="#f0a020" strokeWidth="1.500" aria-hidden="true">
          <path d="M3.500 5V1h7v4M1 5h12v11c0 4-3 7-6 7s-6-3-6-7z" />
        </svg>
      </button>
    </div>
  );
}
